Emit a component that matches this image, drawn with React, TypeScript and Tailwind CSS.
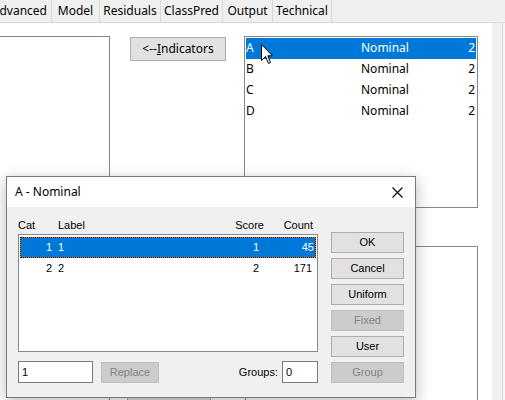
import React from 'react'

const ui = { fontFamily: '"Noto Sans", "Liberation Sans", sans-serif' }
const ms = { fontFamily: '"Liberation Sans", Arial, sans-serif' }

const tabs = [
  { label: 'dvanced', w: 'w-[52px]', partial: true },
  { label: 'Model', w: 'w-[48px]' },
  { label: 'Residuals', w: 'w-[61px]' },
  { label: 'ClassPred', w: 'w-[62px]' },
  { label: 'Output', w: 'w-[50px]' },
  { label: 'Technical', w: 'w-[59px]' },
]

const indicators = ['A', 'B', 'C', 'D']

function WinButton({ label, disabled }: { label: string; disabled?: boolean }) {
  return (
    <div
      className={
        disabled
          ? 'h-[21px] shrink-0 flex items-center justify-center border border-[#bfbfbf] bg-[#cccccc] text-[#838383] text-[11px]'
          : 'h-[21px] shrink-0 flex items-center justify-center border border-[#adadad] bg-[#e1e1e1] text-black text-[11px]'
      }
      style={ms}
    >
      {label}
    </div>
  )
}

function Cursor() {
  return (
    <svg className="absolute left-[261px] top-[44px]" width="13" height="21" viewBox="0 0 13 21">
      <path d="M0.5 0.5 L0.5 16.5 L4.5 12.5 L7.5 19.5 L9.5 18.5 L6.8 11.8 L11.5 11.8 Z" fill="white" stroke="black" strokeWidth="1" />
    </svg>
  )
}

export default function App() {
  return (
    <div className="relative w-[505px] h-[400px] overflow-hidden bg-[#f0f0f0]" style={ui}>
      {/* tab strip */}
      <div className="flex h-[23px] border-b border-[#d9d9d9]">
        {tabs.map((t) => (
          <div
            key={t.label}
            className={`${t.w} h-full flex items-center ${t.partial ? 'justify-end pr-[4px]' : 'justify-center'} border-r border-[#d9d9d9] text-[12px] text-black`}
          >
            {t.label}
          </div>
        ))}
      </div>

      <div className="flex h-[377px] overflow-hidden">
        {/* page */}
        <div className="w-[492px] shrink-0 bg-white flex items-start pt-[13px]">
          <div className="w-[110px] h-[400px] shrink-0 border border-l-0 border-[#828790] bg-white" />

          <div className="w-[134px] shrink-0 flex flex-col items-start pl-[20px]">
            <div className="w-[96px] h-[24px] shrink-0 mt-[1px] border border-[#adadad] bg-[#e1e1e1] flex items-center justify-center text-[12px]">
              &lt;--<span className="underline">I</span>ndicators
            </div>
            <div className="w-[84px] h-[20px] shrink-0 mt-[335px] -ml-[3px] border border-[#adadad] bg-[#e1e1e1]" />
          </div>

          <div className="w-[234px] shrink-0 flex flex-col">
            <div className="h-[172px] shrink-0 border border-[#828790] bg-white p-px text-[12px]">
              {indicators.map((l, i) => (
                <div
                  key={l}
                  className={`h-[21px] pb-px flex items-center ${i === 0 ? 'bg-[#0078d7] text-white' : 'text-black'}`}
                >
                  <span className="w-[115px]">{l}</span>
                  <span className="flex-1">Nominal</span>
                  <span className="pr-px">2</span>
                </div>
              ))}
            </div>
            <div className="mt-[38px] ml-px h-[200px] shrink-0 border border-[#828790] bg-white" />
          </div>
        </div>
        <div className="w-[10px] shrink-0 bg-[#f0f0f0]" />
        <div className="w-px shrink-0 bg-[#d4d4d4]" />
        <div className="flex-1 bg-[#f7f7f7]" />
      </div>

      <Cursor />

      {/* dialog */}
      <div className="absolute left-[6px] top-[176px] w-[410px] h-[222px] border border-[#7a7a7a] bg-[#f0f0f0] shadow-[0_4px_14px_rgba(0,0,0,0.28)] flex flex-col">
        <div className="h-[30px] bg-white flex items-center justify-between pl-[8px] pr-[12px]">
          <span className="text-[12px] text-black">A - Nominal</span>
          <svg width="11" height="11" viewBox="0 0 11 11">
            <path d="M0.5 0.5 L10.5 10.5 M10.5 0.5 L0.5 10.5" stroke="black" strokeWidth="1.1" />
          </svg>
        </div>

        <div className="flex pt-[10px] pl-[11px] text-[11px]" style={ms}>
          <div className="w-[300px] flex flex-col">
            <div className="h-[17px] flex items-start">
              <span className="w-[40px]">Cat</span>
              <span className="flex-1">Label</span>
              <span className="w-[40px] text-right">Score</span>
              <span className="w-[54px] text-right pr-[5px]">Count</span>
            </div>
            <div className="h-[118px] border border-[#828790] bg-white p-px pt-[2px]">
              <div className="bg-[#e8891a]">
                <div className="h-[21px] flex items-center border border-dotted border-black bg-clip-padding bg-[#0078d7] text-white">
                  <span className="w-[31px] text-right">1</span>
                  <span className="flex-1 pl-[6px]">1</span>
                  <span className="w-[40px] text-right">1</span>
                  <span className="w-[56px] text-right pr-px">45</span>
                </div>
              </div>
              <div className="h-[21px] flex items-center border border-transparent">
                <span className="w-[31px] text-right">2</span>
                <span className="flex-1 pl-[6px]">2</span>
                <span className="w-[40px] text-right">2</span>
                <span className="w-[56px] text-right pr-[3px]">171</span>
              </div>
            </div>
            <div className="mt-[9px] h-[22px] flex items-center">
              <div className="w-[75px] h-full border border-[#7a7a7a] bg-white flex items-center pl-[3px]">1</div>
              <div className="w-[58px] h-[21px] ml-[8px]">
                <WinButton label="Replace" disabled />
              </div>
              <div className="flex-1" />
              <span className="mr-[4px]">Groups:</span>
              <div className="w-[36px] h-full border border-[#7a7a7a] bg-white flex items-center pl-[3px]">0</div>
            </div>
          </div>

          <div className="w-[73px] ml-[13px] mt-[15px] flex flex-col gap-[5px]">
            <WinButton label="OK" />
            <WinButton label="Cancel" />
            <WinButton label="Uniform" />
            <WinButton label="Fixed" disabled />
            <WinButton label="User" />
            <WinButton label="Group" disabled />
          </div>
        </div>
      </div>
    </div>
  )
}
